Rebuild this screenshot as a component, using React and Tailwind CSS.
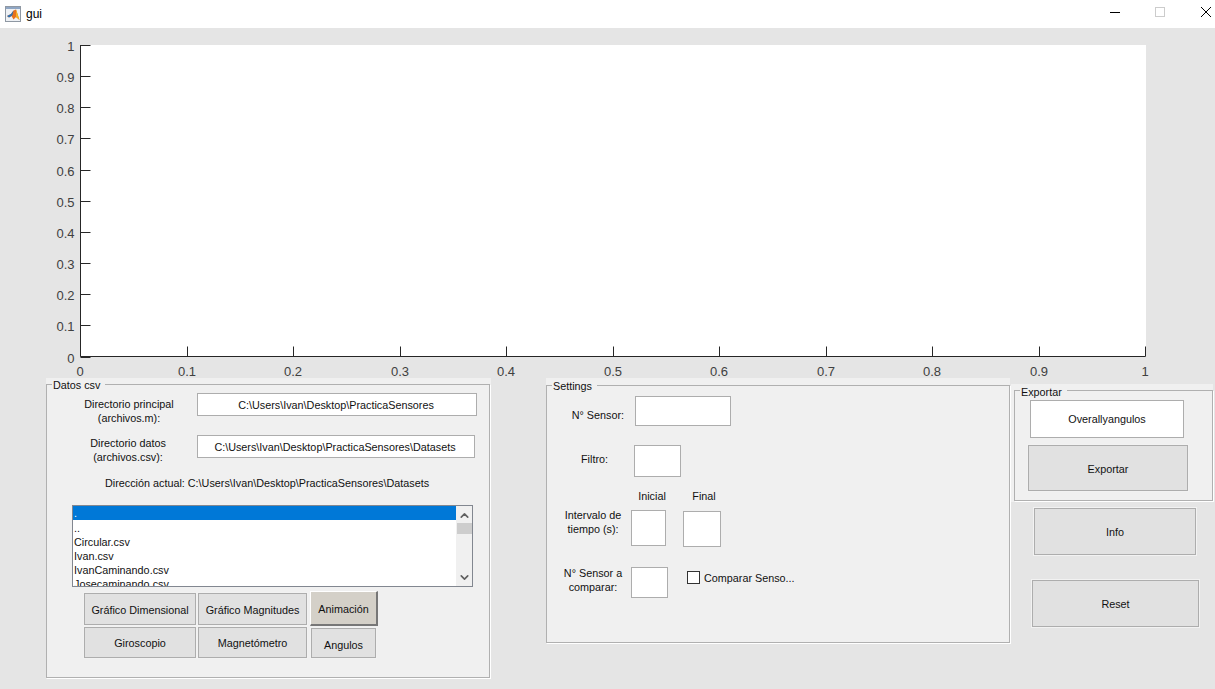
import { ChevronUp, ChevronDown } from "lucide-react";

const yTicks = ["0", "0.1", "0.2", "0.3", "0.4", "0.5", "0.6", "0.7", "0.8", "0.9", "1"];
const files = ["..", "Circular.csv", "Ivan.csv", "IvanCaminando.csv", "Josecaminando.csv"];

const MatlabIcon = () => (
  <svg width="16" height="16" viewBox="0 0 16 16">
    <rect x="0.5" y="0.5" width="15" height="15" fill="#eef1f5" stroke="#8f98a3" />
    <rect x="1" y="1" width="14" height="2" fill="#8fa6c4" />
    <path d="M2 10 L6 8 L8.5 4.5 L11 3.5 L14.5 14 L11 11 L8.5 13.5 L6.5 10 L4 11.5 Z" fill="#e8721c" />
    <path d="M2 10 L6 8 L8.5 4.5 L7.5 9 L6.5 10 L4 11.5 Z" fill="#2d6fb3" />
    <path d="M11 3.5 L14.5 14 L11 11 Z" fill="#f4b223" />
  </svg>
);

const Chart = () => {
  const left = 80.5;
  const right = 1145.5;
  const top = 45;
  const bottom = 356.5;
  const stepX = (right - left) / 10;
  const stepY = (bottom - top) / 10;
  return (
    <svg className="block shrink-0" width="1215" height="350" viewBox="0 28 1215 350">
      <rect x="80" y="45" width="1066" height="312" fill="#ffffff" />
      <path d={`M${left} ${top} V${bottom} H${right}`} fill="none" stroke="#262626" />
      {yTicks.map((label, i) => {
        const y = Math.round(bottom - i * stepY) + 0.5;
        const x = Math.round(left + i * stepX - 0.5) + 0.5;
        return (
          <g key={label} fill="#404040" fontSize="13" fontFamily="Liberation Sans, sans-serif">
            <path d={`M${left} ${y} h10`} stroke="#262626" />
            <path d={`M${x} ${bottom} v-10`} stroke="#262626" />
            <text x="74.5" y={y + 5} textAnchor="end">{label}</text>
            <text x={x - 0.5} y="376" textAnchor="middle">{label}</text>
          </g>
        );
      })}
    </svg>
  );
};

const Btn = ({ className, children }) => (
  <button className={`flex items-center justify-center border border-[#adadad] bg-[#e1e1e1] shadow-[0_0_0_1px_#f2f2f2] ${className}`}>
    {children}
  </button>
);

const Field = ({ className, children }) => (
  <div className={`flex items-center justify-center border border-[#adadad] bg-white ${className}`}>{children}</div>
);

const Panel = ({ title, outer, legend, children }) => (
  <div className={`relative shrink-0 bg-[#f0f0f0] ${outer}`}>
    <div className="h-full border border-[#b0b0b0] shadow-[1px_1px_0_#ffffff]">{children}</div>
    <span className={`absolute bg-[#f0f0f0] pl-[1px] pr-[5px] leading-[14px] ${legend}`}>{title}</span>
  </div>
);

export default function App() {
  return (
    <div className="flex h-[689px] w-[1215px] flex-col overflow-hidden bg-[#e5e5e5] font-['Liberation_Sans',Arial,sans-serif] text-[10.8px] leading-[14px] text-[#111]">
      {/* Title bar */}
      <div className="flex h-[28px] shrink-0 items-center justify-between bg-white pl-[5px] pr-[4px]">
        <div className="flex items-center gap-[5px]">
          <MatlabIcon />
          <span className="text-[12px] text-black">gui</span>
        </div>
        <div className="mb-[4px] flex items-center gap-[35px]">
          <div className="mt-[1px] h-[1px] w-[10px] bg-black" />
          <div className="h-[10px] w-[10px] border border-[#cccccc]" />
          <svg width="10" height="10" viewBox="0 0 10 10" className="ml-[1px]">
            <path d="M0 0 L10 10 M10 0 L0 10" stroke="#000" fill="none" />
          </svg>
        </div>
      </div>

      <Chart />

      <div className="flex min-h-0 flex-1 items-start pl-[46px]">
        {/* Datos csv */}
        <Panel title="Datos csv" outer="h-[301px] w-[445px] pt-[6px] pb-[1px] pr-[1px]" legend="left-[6px] top-0">
          <div className="mt-[8px] flex items-start">
            <div className="ml-[17px] mt-[4px] w-[130px] text-center">Directorio principal<br />(archivos.m):</div>
            <Field className="ml-[3px] h-[23px] w-[280px] pr-[2px]">C:\Users\Ivan\Desktop\PracticaSensores</Field>
          </div>
          <div className="mt-[10px] flex items-start">
            <div className="ml-[16px] mt-[1px] w-[130px] text-center">Directorio datos<br />(archivos.csv):</div>
            <Field className="ml-[4px] h-[23px] w-[278px] pr-[2px]">C:\Users\Ivan\Desktop\PracticaSensores\Datasets</Field>
          </div>
          <div className="ml-[58px] mt-[12px] whitespace-nowrap">Dirección actual: C:\Users\Ivan\Desktop\PracticaSensores\Datasets</div>

          <div className="ml-[25px] mt-[15px] flex h-[82px] w-[401px] overflow-hidden border border-[#828790] bg-white">
            <div className="w-[383px]">
              <div className="h-[14px] bg-[#0078d7] pl-[1px] text-white">.</div>
              {files.map((f) => (
                <div key={f} className="h-[14px] pl-[1px] leading-[16px]">{f}</div>
              ))}
            </div>
            <div className="flex w-[16px] flex-col items-center bg-[#f0f0f0] text-[#606060]">
              <ChevronUp size={13} strokeWidth={3} className="mt-[3px]" />
              <div className="mt-[1px] h-[11px] w-[15px] bg-[#cdcdcd]" />
              <ChevronDown size={13} strokeWidth={3} className="mt-auto mb-[2px]" />
            </div>
          </div>

          <div className="ml-[37px] mt-[4px] flex items-start">
            <Btn className="mt-[2px] h-[32px] w-[112px] pt-[2px]">Gráfico Dimensional</Btn>
            <Btn className="ml-[2px] mt-[2px] h-[32px] w-[109px] pt-[2px]">Gráfico Magnitudes</Btn>
            <button className="ml-[3px] h-[35px] w-[68px] border-l border-t border-white border-b-2 border-r-2 border-b-[#777] border-r-[#777] bg-[#d4d0c8] pt-[1px]">Animación</button>
          </div>
          <div className="ml-[37px] mt-[1px] flex items-start">
            <Btn className="h-[31px] w-[112px]">Giroscopio</Btn>
            <Btn className="ml-[2px] h-[31px] w-[109px]">Magnetómetro</Btn>
            <Btn className="ml-[4px] mt-[1px] h-[30px] w-[65px] pt-[3px]">Angulos</Btn>
          </div>
        </Panel>

        {/* Settings */}
        <Panel title="Settings" outer="ml-[55px] h-[266px] w-[464px] pt-[7px] pb-[1px]" legend="left-[6px] top-[1px]">
          <div className="mt-[10px] flex items-center">
            <div className="ml-[3px] mt-[8px] w-[74px] whitespace-nowrap text-right">N° Sensor:</div>
            <Field className="ml-[11px] h-[30px] w-[96px]" />
          </div>
          <div className="mt-[19px] flex items-center">
            <div className="ml-[34px] mb-[4px] w-[50px]">Filtro:</div>
            <Field className="ml-[3px] h-[32px] w-[47px]" />
          </div>
          <div className="mt-[12px] flex">
            <div className="ml-[85px] w-[40px] text-center">Inicial</div>
            <div className="ml-[12px] w-[40px] text-center">Final</div>
          </div>
          <div className="mt-[7px] flex items-start">
            <div className="ml-[6px] mt-[-2px] w-[80px] text-center">Intervalo de<br />tiempo (s):</div>
            <Field className="ml-[-2px] h-[36px] w-[35px]" />
            <Field className="ml-[17px] mt-[1px] h-[36px] w-[38px]" />
          </div>
          <div className="mt-[20px] flex items-start">
            <div className="ml-[6px] mt-[-1px] w-[80px] text-center">N° Sensor a<br />comparar:</div>
            <Field className="ml-[-2px] h-[31px] w-[37px]" />
            <div className="ml-[19px] mt-[4px] h-[13px] w-[13px] border border-[#333] bg-white" />
            <span className="ml-[4px] mt-[4px] whitespace-nowrap">Comparar Senso...</span>
          </div>
        </Panel>

        {/* Exportar + botones sueltos */}
        <div className="ml-px flex shrink-0 flex-col">
          <Panel title="Exportar" outer="mt-[6px] h-[118px] w-[202px] pl-[3px] pt-[6px] pb-[1px]" legend="left-[9px] top-[1px]">
            <Field className="ml-[15px] mt-[9px] h-[38px] w-[154px]">Overallyangulos</Field>
            <Btn className="ml-[13px] mt-[7px] h-[46px] w-[160px] pt-[2px]">Exportar</Btn>
          </Panel>
          <Btn className="ml-[23px] mt-[6px] h-[47px] w-[162px]">Info</Btn>
          <Btn className="ml-[21px] mt-[25px] h-[47px] w-[167px]">Reset</Btn>
        </div>
      </div>
    </div>
  );
}
